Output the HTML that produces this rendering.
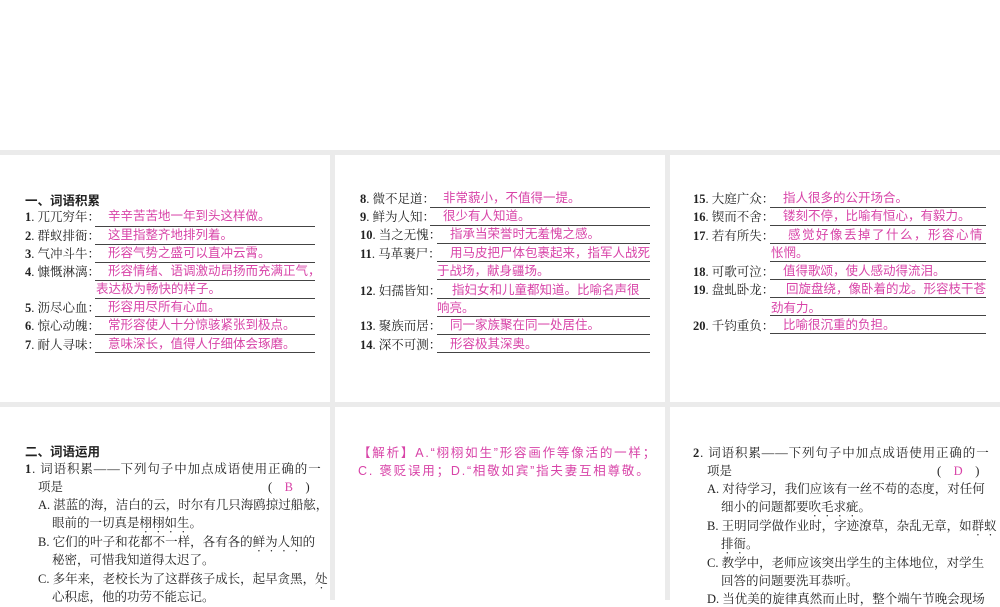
<!DOCTYPE html>
<html><head><meta charset="utf-8"><style>
body{margin:0;width:1000px;height:600px;background:#fff;position:relative;overflow:hidden;font-family:"Liberation Serif","Noto Serif CJK SC",serif;font-size:12.5px;color:#222}
.g{position:absolute;background:#ebebeb}
.l{position:absolute;white-space:nowrap;line-height:16px}
.p{color:#d844a8;font-family:"Liberation Sans","Noto Sans CJK SC",sans-serif}
.u{position:absolute;height:1px;background:#444}
b{font-weight:bold}
.h{font-family:"Liberation Sans","Noto Sans CJK SC",sans-serif;font-weight:bold}
.d{text-emphasis:dot;text-emphasis-position:under;-webkit-text-emphasis:dot;-webkit-text-emphasis-position:under}
</style></head><body>
<div class="g" style="left:0;top:150px;width:1000px;height:5px"></div>
<div class="g" style="left:0;top:402px;width:1000px;height:5px"></div>
<div class="g" style="left:330px;top:150px;width:5px;height:450px"></div>
<div class="g" style="left:665px;top:150px;width:5px;height:450px"></div>

<div class="l h" style="left:25px;top:193px">一、词语积累</div>
<div class="l" style="left:25px;top:209px"><b>1</b>. 兀兀穷年：</div><div class="l p" style="left:108px;top:208px">辛辛苦苦地一年到头这样做。</div><div class="u" style="left:95px;top:226px;width:220px"></div>
<div class="l" style="left:25px;top:228px"><b>2</b>. 群蚁排衙：</div><div class="l p" style="left:108px;top:227px">这里指整齐地排列着。</div><div class="u" style="left:95px;top:244px;width:220px"></div>
<div class="l" style="left:25px;top:246px"><b>3</b>. 气冲斗牛：</div><div class="l p" style="left:108px;top:245px">形容气势之盛可以直冲云霄。</div><div class="u" style="left:95px;top:262px;width:220px"></div>
<div class="l" style="left:25px;top:264px"><b>4</b>. 慷慨淋漓：</div><div class="l p" style="left:108px;top:263px">形容情绪、语调激动昂扬而充满正气，</div><div class="u" style="left:95px;top:280px;width:220px"></div>
<div class="l p" style="left:96px;top:281px">表达极为畅快的样子。</div><div class="u" style="left:95px;top:298px;width:220px"></div>
<div class="l" style="left:25px;top:300px"><b>5</b>. 沥尽心血：</div><div class="l p" style="left:108px;top:299px">形容用尽所有心血。</div><div class="u" style="left:95px;top:316px;width:220px"></div>
<div class="l" style="left:25px;top:318px"><b>6</b>. 惊心动魄：</div><div class="l p" style="left:108px;top:317px">常形容使人十分惊骇紧张到极点。</div><div class="u" style="left:95px;top:334px;width:220px"></div>
<div class="l" style="left:25px;top:337px"><b>7</b>. 耐人寻味：</div><div class="l p" style="left:108px;top:336px">意味深长，值得人仔细体会琢磨。</div><div class="u" style="left:95px;top:352px;width:220px"></div>

<div class="l" style="left:360px;top:191px"><b>8</b>. 微不足道：</div><div class="l p" style="left:443px;top:190px">非常藐小，不值得一提。</div><div class="u" style="left:430px;top:207px;width:220px"></div>
<div class="l" style="left:360px;top:209px"><b>9</b>. 鲜为人知：</div><div class="l p" style="left:443px;top:208px">很少有人知道。</div><div class="u" style="left:430px;top:225px;width:220px"></div>
<div class="l" style="left:360px;top:227px"><b>10</b>. 当之无愧：</div><div class="l p" style="left:450px;top:226px">指承当荣誉时无羞愧之感。</div><div class="u" style="left:437px;top:243px;width:213px"></div>
<div class="l" style="left:360px;top:246px"><b>11</b>. 马革裹尸：</div><div class="l p" style="left:450px;top:245px">用马皮把尸体包裹起来，指军人战死</div><div class="u" style="left:437px;top:261px;width:213px"></div>
<div class="l p" style="left:437px;top:263px">于战场，献身疆场。</div><div class="u" style="left:437px;top:279px;width:213px"></div>
<div class="l" style="left:360px;top:283px"><b>12</b>. 妇孺皆知：</div><div class="l p" style="left:452px;top:282px">指妇女和儿童都知道。比喻名声很</div><div class="u" style="left:437px;top:298px;width:213px"></div>
<div class="l p" style="left:437px;top:300px">响亮。</div><div class="u" style="left:437px;top:316px;width:213px"></div>
<div class="l" style="left:360px;top:318px"><b>13</b>. 聚族而居：</div><div class="l p" style="left:450px;top:317px">同一家族聚在同一处居住。</div><div class="u" style="left:437px;top:334px;width:213px"></div>
<div class="l" style="left:360px;top:337px"><b>14</b>. 深不可测：</div><div class="l p" style="left:450px;top:336px">形容极其深奥。</div><div class="u" style="left:437px;top:352px;width:213px"></div>

<div class="l" style="left:693px;top:191px"><b>15</b>. 大庭广众：</div><div class="l p" style="left:783px;top:190px">指人很多的公开场合。</div><div class="u" style="left:770px;top:207px;width:216px"></div>
<div class="l" style="left:693px;top:209px"><b>16</b>. 锲而不舍：</div><div class="l p" style="left:783px;top:208px">镂刻不停，比喻有恒心，有毅力。</div><div class="u" style="left:770px;top:225px;width:216px"></div>
<div class="l" style="left:693px;top:228px"><b>17</b>. 若有所失：</div><div class="l p" style="left:788px;top:227px;letter-spacing:1.5px">感觉好像丢掉了什么，形容心情</div><div class="u" style="left:770px;top:243px;width:216px"></div>
<div class="l p" style="left:771px;top:245px">怅惘。</div><div class="u" style="left:770px;top:261px;width:216px"></div>
<div class="l" style="left:693px;top:264px"><b>18</b>. 可歌可泣：</div><div class="l p" style="left:783px;top:263px">值得歌颂，使人感动得流泪。</div><div class="u" style="left:770px;top:279px;width:216px"></div>
<div class="l" style="left:693px;top:282px"><b>19</b>. 盘虬卧龙：</div><div class="l p" style="left:786px;top:281px">回旋盘绕，像卧着的龙。形容枝干苍</div><div class="u" style="left:770px;top:297px;width:216px"></div>
<div class="l p" style="left:771px;top:300px">劲有力。</div><div class="u" style="left:770px;top:315px;width:216px"></div>
<div class="l" style="left:693px;top:318px"><b>20</b>. 千钧重负：</div><div class="l p" style="left:783px;top:317px">比喻很沉重的负担。</div><div class="u" style="left:770px;top:333px;width:216px"></div>

<div class="l h" style="left:25px;top:444px">二、词语运用</div>
<div class="l" style="left:25px;top:461px;letter-spacing:0.9px"><b>1</b>. 词语积累——下列句子中加点成语使用正确的一</div>
<div class="l" style="left:38px;top:479px">项是</div><div class="l" style="left:268px;top:479px">(　<span class="p" style="font-family:'Liberation Serif',serif">B</span>　)</div>
<div class="l" style="left:38px;top:497px">A. 湛蓝的海，洁白的云，时尔有几只海鸥掠过船舷，</div>
<div class="l" style="left:52px;top:515px">眼前的一切真是<span class="d">栩栩如生</span>。</div>
<div class="l" style="left:38px;top:534px">B. 它们的叶子和花都不一样，各有各的<span class="d">鲜为人知</span>的</div>
<div class="l" style="left:52px;top:552px">秘密，可惜我知道得太迟了。</div>
<div class="l" style="left:38px;top:571px">C. 多年来，老校长为了这群孩子成长，起早贪黑，<span class="d">处</span></div>
<div class="l" style="left:52px;top:589px">心积虑，他的功劳不能忘记。</div>

<div class="l p" style="left:358px;top:445px;letter-spacing:1.8px">【解析】A.“栩栩如生”形容画作等像活的一样；</div>
<div class="l p" style="left:358px;top:463px;letter-spacing:1.8px">C. 褒贬误用；D.“相敬如宾”指夫妻互相尊敬。</div>

<div class="l" style="left:693px;top:445px;letter-spacing:0.9px"><b>2</b>. 词语积累——下列句子中加点成语使用正确的一</div>
<div class="l" style="left:707px;top:463px">项是</div><div class="l" style="left:937px;top:463px">(　<span class="p" style="font-family:'Liberation Serif',serif">D</span>　)</div>
<div class="l" style="left:707px;top:481px">A. 对待学习，我们应该有一丝不苟的态度，对任何</div>
<div class="l" style="left:721px;top:499px">细小的问题都要<span class="d">吹毛求疵</span>。</div>
<div class="l" style="left:707px;top:518px">B. 王明同学做作业时，字迹潦草，杂乱无章，如<span class="d">群蚁</span></div>
<div class="l" style="left:721px;top:536px"><span class="d">排衙</span>。</div>
<div class="l" style="left:707px;top:555px">C. 教学中，老师应该突出学生的主体地位，对学生</div>
<div class="l" style="left:721px;top:573px">回答的问题要洗耳恭听。</div>
<div class="l" style="left:707px;top:591px">D. 当优美的旋律真然而止时，整个端午节晚会现场</div>
</body></html>
